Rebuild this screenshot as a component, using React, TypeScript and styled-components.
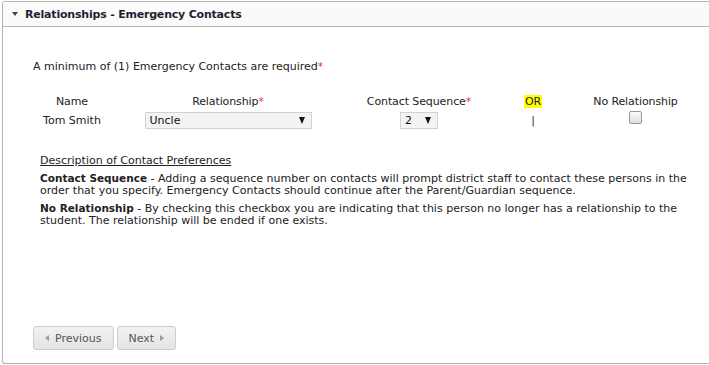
import * as React from 'react';
import styled, { createGlobalStyle } from 'styled-components';

const GlobalStyle = createGlobalStyle`
    html, body {
        margin: 0;
        padding: 0;
        background: #fff;
        overflow: hidden;
    }
    body {
        font-family: "DejaVu Sans", Verdana, sans-serif;
        font-size: 11px;
        color: #222;
    }
`;

const Page = styled.div`
    padding: 1px 0 0 2px;
`;

const Panel = styled.section`
    height: 361px;
    border: 1px solid #b4b4b4;
    border-right: none;
    border-top-left-radius: 3px;
    border-bottom-left-radius: 3px;
    display: flex;
    flex-direction: column;
`;

const PanelHeader = styled.header`
    height: 24px;
    display: flex;
    align-items: center;
    gap: 7px;
    padding-left: 9px;
    background: #fafafa;
    border-bottom: 1px solid #b4b4b4;
    font-size: 11px;
    font-weight: bold;
    letter-spacing: -0.2px;
    color: #1f1f33;
`;

const Caret = styled.span`
    width: 0;
    height: 0;
    border-left: 3.5px solid transparent;
    border-right: 3.5px solid transparent;
    border-top: 4px solid #444;
`;

const PanelBody = styled.div`
    flex: 1;
    display: flex;
    flex-direction: column;
    padding: 0 10px 13px 30px;
`;

const Required = styled.span`
    color: #e8303a;
`;

const Notice = styled.p`
    margin: 33px 0 0;
    line-height: 14px;
`;

const ContactGrid = styled.div`
    margin-top: 18px;
    display: grid;
    grid-template-columns: 78px 234px 148px 80px 125px;
    grid-auto-rows: 19px;
    align-items: center;
    justify-items: center;
`;

const HeaderCell = styled.div`
    line-height: 14px;
    letter-spacing: -0.1px;
`;

const Highlight = styled.span`
    background: #ffff00;
    padding: 0 1px;
`;

const Select = styled.div<{ $width: number }>`
    width: ${(p) => p.$width}px;
    height: 17px;
    box-sizing: border-box;
    border: 1px solid #d2d2d2;
    background: #f3f3f3;
    display: flex;
    align-items: center;
    justify-content: space-between;
    padding: 0 6px 0 4px;
    font-size: 11px;
    color: #111;
`;

const SelectArrow = styled.span`
    width: 0;
    height: 0;
    border-left: 3.5px solid transparent;
    border-right: 3.5px solid transparent;
    border-top: 7px solid #111;
`;

const Separator = styled.span`
    color: #2c1e5a;
`;

const CheckBox = styled.span`
    width: 11px;
    height: 11px;
    margin-top: -7px;
    border: 1px solid #9a9a9a;
    border-radius: 2px;
    background: linear-gradient(#fbfbfb, #dedede);
`;

const Description = styled.div`
    margin: 24px 0 0 7px;
    display: flex;
    flex-direction: column;
    gap: 6px;
`;

const DescriptionTitle = styled.div`
    text-decoration: underline;
    line-height: 14px;
    margin-bottom: -1px;
`;

const Paragraph = styled.p`
    margin: 0;
    line-height: 12px;
`;

const Term = styled.b`
    font-weight: bold;
    font-size: 10.5px;
    line-height: 10px;
`;

const Footer = styled.div`
    margin-top: auto;
    display: flex;
    gap: 3px;
`;

const NavButton = styled.button`
    height: 24px;
    box-sizing: border-box;
    padding: 0 11px;
    display: flex;
    align-items: center;
    gap: 6px;
    font-family: inherit;
    font-size: 11px;
    color: #555;
    border: 1px solid #cdcdcd;
    border-radius: 3px;
    background: linear-gradient(#f2f2f2, #e4e4e4);
`;

const Arrow = styled.span<{ $dir: 'left' | 'right' }>`
    width: 0;
    height: 0;
    border-top: 3.5px solid transparent;
    border-bottom: 3.5px solid transparent;
    ${(p) => (p.$dir === 'left' ? 'border-right: 4px solid #999;' : 'border-left: 4px solid #999;')}
`;

export default function App(): React.ReactElement {
    return (
        <Page>
            <GlobalStyle />
            <Panel>
                <PanelHeader>
                    <Caret />
                    Relationships - Emergency Contacts
                </PanelHeader>
                <PanelBody>
                    <Notice>
                        A minimum of (1) Emergency Contacts are required<Required>*</Required>
                    </Notice>

                    <ContactGrid>
                        <HeaderCell>Name</HeaderCell>
                        <HeaderCell>
                            Relationship<Required>*</Required>
                        </HeaderCell>
                        <HeaderCell>
                            Contact Sequence<Required>*</Required>
                        </HeaderCell>
                        <HeaderCell>
                            <Highlight>OR</Highlight>
                        </HeaderCell>
                        <HeaderCell>No Relationship</HeaderCell>

                        <div>Tom Smith</div>
                        <Select $width={167}>
                            Uncle
                            <SelectArrow />
                        </Select>
                        <Select $width={38}>
                            2
                            <SelectArrow />
                        </Select>
                        <Separator>|</Separator>
                        <CheckBox />
                    </ContactGrid>

                    <Description>
                        <DescriptionTitle>Description of Contact Preferences</DescriptionTitle>
                        <Paragraph>
                            <Term>Contact Sequence</Term> - Adding a sequence number on contacts will prompt
                            district staff to contact these persons in the order that you specify. Emergency
                            Contacts should continue after the Parent/Guardian sequence.
                        </Paragraph>
                        <Paragraph>
                            <Term>No Relationship</Term> - By checking this checkbox you are indicating that this
                            person no longer has a relationship to the student. The relationship will be ended if
                            one exists.
                        </Paragraph>
                    </Description>

                    <Footer>
                        <NavButton>
                            <Arrow $dir="left" />
                            Previous
                        </NavButton>
                        <NavButton>
                            Next
                            <Arrow $dir="right" />
                        </NavButton>
                    </Footer>
                </PanelBody>
            </Panel>
        </Page>
    );
}
